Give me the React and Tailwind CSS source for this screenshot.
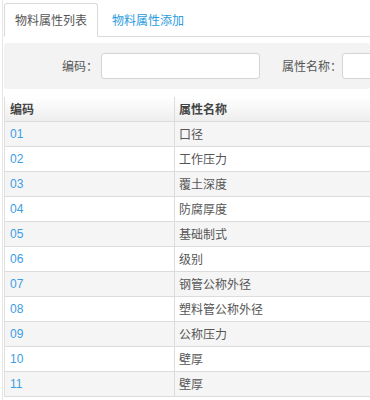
const rows = [
  ['01', '口径'],
  ['02', '工作压力'],
  ['03', '覆土深度'],
  ['04', '防腐厚度'],
  ['05', '基础制式'],
  ['06', '级别'],
  ['07', '钢管公称外径'],
  ['08', '塑料管公称外径'],
  ['09', '公称压力'],
  ['10', '壁厚'],
  ['11', '壁厚'],
];

export default function App() {
  return (
    <div
      className="w-[370px] h-[400px] overflow-hidden bg-white text-[12px] text-[#555]"
      style={{ fontFamily: '"Microsoft YaHei", "Noto Sans CJK SC", sans-serif' }}
    >
      <div className="ml-[2px] border-l border-[#e6e6e6] h-full pl-px pt-[3px]">
        {/* tabs */}
        <div className="flex h-[34px] border-b border-[#d9d9d9]">
          <div className="w-[94px] h-[34px] bg-white border border-[#d9d9d9] border-b-white rounded-t-[3px] flex items-center justify-center text-[12px] text-[#555]">
            物料属性列表
          </div>
          <div className="pl-[14px] flex items-center text-[12px] text-[#2a9be0]">
            物料属性添加
          </div>
        </div>

        {/* search */}
        <div className="mt-[6px] h-[46px] bg-[#f3f3f3] rounded-[3px] flex items-center whitespace-nowrap">
          <span className="ml-[58px] w-[36px] text-[12px]">编码：</span>
          <div className="ml-[3px] w-[159px] h-[26px] shrink-0 bg-white border border-[#d4d4d4] rounded-[3px]" />
          <span className="ml-[22px] w-[62px] text-[12px]">属性名称：</span>
          <div className="w-[100px] h-[26px] shrink-0 bg-white border border-[#d4d4d4] rounded-[3px]" />
        </div>

        {/* table */}
        <div className="mt-[8px] border-l border-[#e0e0e0]">
          <div className="flex h-[25px] border-b border-[#dcdcdc] bg-gradient-to-b from-white to-[#eeeeee] font-bold text-[#444]">
            <div className="w-[170px] pl-[5px] flex items-center border-r border-[#dcdcdc]">编码</div>
            <div className="flex-1 pl-[4px] flex items-center">属性名称</div>
          </div>
          {rows.map((r, i) => (
            <div
              key={i}
              className={
                'flex h-[25px] border-b border-[#dcdcdc] ' + (i % 2 === 0 ? 'bg-[#f5f5f5]' : 'bg-white')
              }
            >
              <div
                className="w-[170px] pl-[5px] flex items-center border-r border-[#dcdcdc] text-[#3d9de3]"
                style={{ fontFamily: '"Liberation Sans", Arial, sans-serif' }}
              >
                {r[0]}
              </div>
              <div className="flex-1 pl-[4px] flex items-center text-[12px] text-[#555]">{r[1]}</div>
            </div>
          ))}
        </div>
      </div>
    </div>
  );
}
